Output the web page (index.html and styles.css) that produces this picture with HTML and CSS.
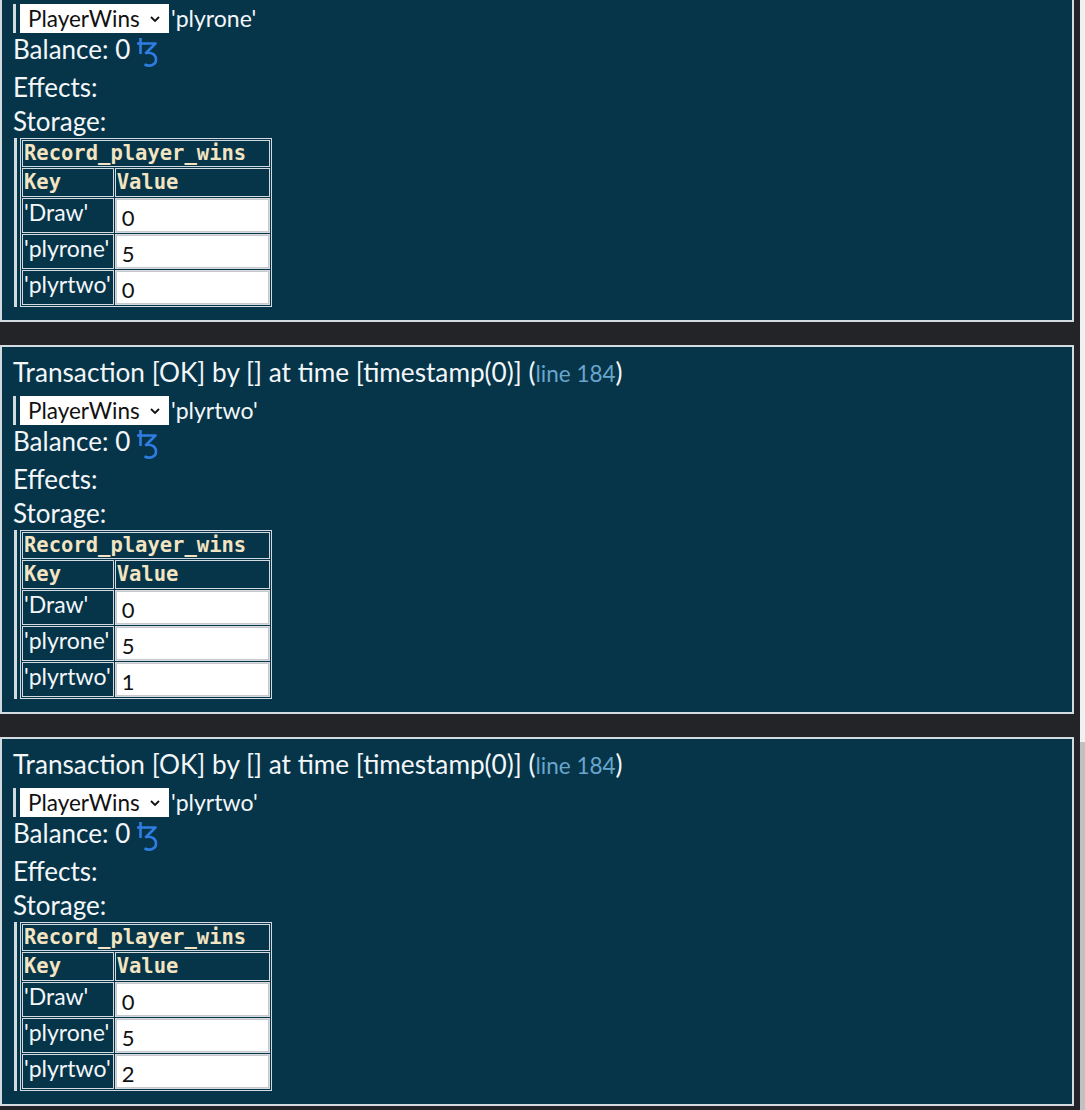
FILE: index.html
```html
<!DOCTYPE html>
<html>
<head>
<meta charset="utf-8">
<link rel="stylesheet" href="styles.css">
</head>
<body>
<div class="page">
  <main class="log">
    <section class="panel first">
      <div class="title">Transaction [OK] by [] at time [timestamp(0)] (<span class="line">line 184</span>)</div>
      <div class="call"><span class="bar"><span class="selwrap"><select class="sel"><option>PlayerWins</option></select><svg class="chev" viewBox="0 0 10 6"><path d="M1 1 L5 5 L9 1"/></svg></span></span><span class="arg">'plyrone'</span></div>
      <div class="bal">Balance: 0<svg class="tez" viewBox="0 0 22 30"><path d="M4.5 1 V17"/><path d="M1 6.5 H19.5 L10 16 C16 15 20 18 20 22.5 C20 28 14 30 8.5 27.5"/></svg></div>
      <div class="lbl">Effects:</div>
      <div class="lbl">Storage:</div>
      <div class="storage">
        <table class="rec">
          <tr><th colspan="2" class="name">Record_player_wins</th></tr>
          <tr><th class="hd">Key</th><th class="hd">Value</th></tr>
          <tr><td class="key">'Draw'</td><td class="val"><input class="inp" value="0"></td></tr>
          <tr><td class="key">'plyrone'</td><td class="val"><input class="inp" value="5"></td></tr>
          <tr><td class="key">'plyrtwo'</td><td class="val"><input class="inp" value="0"></td></tr>
        </table>
      </div>
    </section>
    <section class="panel">
      <div class="title">Transaction [OK] by [] at time [timestamp(0)] (<span class="line">line 184</span>)</div>
      <div class="call"><span class="bar"><span class="selwrap"><select class="sel"><option>PlayerWins</option></select><svg class="chev" viewBox="0 0 10 6"><path d="M1 1 L5 5 L9 1"/></svg></span></span><span class="arg">'plyrtwo'</span></div>
      <div class="bal">Balance: 0<svg class="tez" viewBox="0 0 22 30"><path d="M4.5 1 V17"/><path d="M1 6.5 H19.5 L10 16 C16 15 20 18 20 22.5 C20 28 14 30 8.5 27.5"/></svg></div>
      <div class="lbl">Effects:</div>
      <div class="lbl">Storage:</div>
      <div class="storage">
        <table class="rec">
          <tr><th colspan="2" class="name">Record_player_wins</th></tr>
          <tr><th class="hd">Key</th><th class="hd">Value</th></tr>
          <tr><td class="key">'Draw'</td><td class="val"><input class="inp" value="0"></td></tr>
          <tr><td class="key">'plyrone'</td><td class="val"><input class="inp" value="5"></td></tr>
          <tr><td class="key">'plyrtwo'</td><td class="val"><input class="inp" value="1"></td></tr>
        </table>
      </div>
    </section>
    <section class="panel">
      <div class="title">Transaction [OK] by [] at time [timestamp(0)] (<span class="line">line 184</span>)</div>
      <div class="call"><span class="bar"><span class="selwrap"><select class="sel"><option>PlayerWins</option></select><svg class="chev" viewBox="0 0 10 6"><path d="M1 1 L5 5 L9 1"/></svg></span></span><span class="arg">'plyrtwo'</span></div>
      <div class="bal">Balance: 0<svg class="tez" viewBox="0 0 22 30"><path d="M4.5 1 V17"/><path d="M1 6.5 H19.5 L10 16 C16 15 20 18 20 22.5 C20 28 14 30 8.5 27.5"/></svg></div>
      <div class="lbl">Effects:</div>
      <div class="lbl">Storage:</div>
      <div class="storage">
        <table class="rec">
          <tr><th colspan="2" class="name">Record_player_wins</th></tr>
          <tr><th class="hd">Key</th><th class="hd">Value</th></tr>
          <tr><td class="key">'Draw'</td><td class="val"><input class="inp" value="0"></td></tr>
          <tr><td class="key">'plyrone'</td><td class="val"><input class="inp" value="5"></td></tr>
          <tr><td class="key">'plyrtwo'</td><td class="val"><input class="inp" value="2"></td></tr>
        </table>
      </div>
    </section>
  </main>
  <div class="scrollbar"><div class="thumb"></div></div>
</div>
</body>
</html>
```
FILE: styles.css
```css
html, body {
  margin: 0;
  padding: 0;
  background: #232428;
  overflow: hidden;
}
body {
  font-family: Lato, "Open Sans", sans-serif;
  color: #f4f7f9;
}
.page {
  display: flex;
  height: 1110px;
  overflow: hidden;
}
.log {
  flex: 1;
  padding-right: 6px;
}
.scrollbar {
  width: 5px;
  background: #f1f1f1;
  display: flex;
  flex-direction: column;
}
.thumb {
  margin-top: 742px;
  flex: 1;
  background: #c1c1c1;
}
.panel {
  background: #06354a;
  border: 2px solid #d3dae0;
  padding: 10px 12px 13px 11px;
  margin-bottom: 23px;
}
.panel.first {
  margin-top: -47px;
}
.title {
  font-size: 26.2px;
  line-height: 31px;
}
.line {
  color: #6aa5cc;
  font-size: 22.5px;
}
.call {
  display: flex;
  align-items: center;
  margin-top: 7px;
  height: 29px;
}
.bar {
  display: flex;
  border-left: 3px solid #d3dae0;
  padding-left: 4px;
  height: 29px;
}
.selwrap {
  position: relative;
  display: block;
}
.sel {
  appearance: none;
  -webkit-appearance: none;
  display: block;
  width: 149px;
  height: 29px;
  margin: 0;
  border: none;
  border-radius: 0;
  background: #ffffff;
  color: #111;
  font-family: Lato, sans-serif;
  font-size: 22.5px;
  padding: 0 0 0 8px;
}
.chev {
  position: absolute;
  right: 9px;
  top: 12px;
  width: 10px;
  height: 6px;
  fill: none;
  stroke: #111;
  stroke-width: 1.8;
}
.arg {
  font-size: 23px;
  margin-left: 2px;
  line-height: 29px;
}
.bal {
  display: flex;
  align-items: flex-start;
  height: 36px;
  padding-top: 1px;
  font-size: 26px;
  line-height: 31px;
}
.tez {
  width: 22px;
  height: 30px;
  margin-left: 6px;
  margin-top: 3px;
  fill: none;
  stroke: #2f7de2;
  stroke-width: 2.6;
  stroke-linejoin: round;
}
.lbl {
  font-size: 26px;
  line-height: 34px;
}
.storage {
  margin-top: 0;
  margin-left: 1px;
  border-left: 3px solid #d3dae0;
  padding-left: 3px;
  width: max-content;
}
.rec {
  border: 1px solid #d3dae0;
  border-collapse: separate;
  border-spacing: 1px;
}
.rec th, .rec td {
  border: 1px solid #d3dae0;
  padding: 0;
}
.rec th {
  font-family: "DejaVu Sans Mono", "Liberation Mono", monospace;
  font-weight: bold;
  font-size: 20.5px;
  color: #f3e4c2;
  text-align: left;
  padding: 0 1px;
}
.name {
  line-height: 25px;
}
.hd {
  line-height: 27px;
}
.key {
  font-size: 23px;
  line-height: 26px;
  vertical-align: top;
  padding: 0 2px 0 1px !important;
}
.val {
  width: 153px;
}
.inp {
  display: block;
  box-sizing: border-box;
  width: 153px;
  height: 33px;
  margin: 0;
  border: 1px solid #c8c8c8;
  padding: 3px 0 0 5px;
  font-family: Lato, sans-serif;
  font-size: 22px;
  color: #111;
  background: #fff;
}
```
